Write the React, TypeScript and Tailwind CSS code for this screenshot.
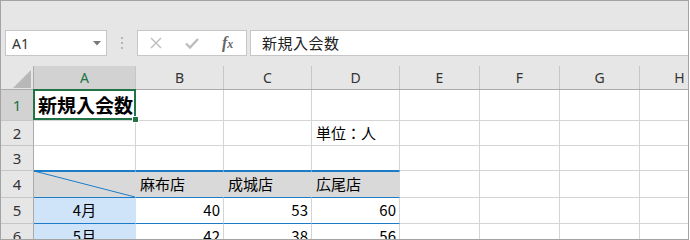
import React from "react";

type Col = { k: string; w: string };
const cols: Col[] = [
  { k: "A", w: "w-[102px]" },
  { k: "B", w: "w-[88px]" },
  { k: "C", w: "w-[88px]" },
  { k: "D", w: "w-[88px]" },
  { k: "E", w: "w-[80px]" },
  { k: "F", w: "w-[80px]" },
  { k: "G", w: "w-[80px]" },
  { k: "H", w: "w-[80px]" },
];

const jp = "font-['Noto_Sans_CJK_JP',sans-serif]";
const ui = "font-['Noto_Sans','Noto_Sans_CJK_JP',sans-serif]";

function RowHead({ n, h, sel }: { n: number; h: string; sel?: boolean }) {
  return (
    <div
      className={`${h} w-[33px] shrink-0 flex items-center justify-center border-r border-b border-r-[#ababab] border-b-[#c6c6c6] text-[15px] ${ui} ${
        sel ? "bg-[#d2d2d2] text-[#217346]" : "bg-[#e6e6e6] text-[#333333]"
      }`}
    >
      {n}
    </div>
  );
}

function Cell({
  w,
  cls,
  children,
}: {
  w: string;
  cls: string;
  children?: React.ReactNode;
}) {
  return <div className={`${w} shrink-0 h-full flex items-center whitespace-nowrap ${cls}`}>{children}</div>;
}

const plain = "border-r border-b border-[#d4d4d4]";

function Toolbar() {
  return (
    <div className="h-[55px] bg-[#e6e6e6] pt-[29px] flex items-start">
      <div className="ml-[4px] w-[102px] h-[26px] bg-white border border-[#c6c6c6] flex items-center">
        <span className={`pl-[6px] text-[14px] text-[#333333] ${ui}`}>A1</span>
        <svg className="ml-auto mr-[5px]" width="8" height="5" viewBox="0 0 8 5">
          <polygon points="0,0 8,0 4,4.5" fill="#7a7a7a" />
        </svg>
      </div>
      <div className="ml-[14px] h-[26px] flex flex-col items-center justify-center gap-[3px]">
        <div className="w-[2px] h-[2px] bg-[#b5b5b5]" />
        <div className="w-[2px] h-[2px] bg-[#b5b5b5]" />
        <div className="w-[2px] h-[2px] bg-[#b5b5b5]" />
      </div>
      <div className="ml-[14px] w-[110px] h-[26px] bg-white border border-[#c6c6c6] flex items-center">
        <svg className="ml-[12px]" width="12" height="12" viewBox="0 0 12 12">
          <path d="M1 1 L11 11 M11 1 L1 11" stroke="#bdbdbd" strokeWidth="1.4" fill="none" />
        </svg>
        <svg className="ml-[23px]" width="14" height="11" viewBox="0 0 14 11">
          <polyline points="1,5.5 5,9.5 13,1" stroke="#bdbdbd" strokeWidth="2.4" fill="none" />
        </svg>
        <span className="ml-[23px] font-['Liberation_Serif',serif] italic text-[#666666] leading-none">
          <span className="text-[16px] font-bold">f</span>
          <span className="text-[12px] font-bold">x</span>
        </span>
      </div>
      <div className="ml-[3px] flex-1 h-[26px] bg-white border border-r-0 border-[#c6c6c6] flex items-center">
        <span className={`pl-[11px] text-[15px] tracking-[0.5px] text-[#222222] ${jp}`}>新規入会数</span>
      </div>
    </div>
  );
}

function HeaderRow() {
  return (
    <div className="h-[34px] bg-[#e6e6e6] flex flex-col">
      <div className="h-[10px]" />
      <div className="h-[24px] flex border-b border-[#ababab]">
        <div className="w-[33px] shrink-0 border-r border-[#ababab] relative">
          <svg className="absolute right-[2px] bottom-[1px]" width="18" height="18" viewBox="0 0 18 18">
            <polygon points="18,0 18,18 0,18" fill="#b8b8b8" />
          </svg>
        </div>
        {cols.map((c) => (
          <div
            key={c.k}
            className={`${c.w} shrink-0 flex items-center justify-center border-r border-[#c6c6c6] text-[14px] ${ui} ${
              c.k === "A" ? "bg-[#d2d2d2] text-[#217346]" : "text-[#333333]"
            }`}
          >
            {c.k}
          </div>
        ))}
      </div>
    </div>
  );
}

export default function App() {
  const blue = "border-[#1c7cc7]";
  return (
    <div className="w-[690px] h-[240px] bg-white">
      <div className="w-[689px] h-[240px] border border-[#a3a3a3] overflow-hidden flex flex-col">
        <Toolbar />
        <div className="relative flex flex-col">
          <HeaderRow />

          {/* Row 1 */}
          <div className="h-[31px] flex">
            <RowHead n={1} h="h-[31px]" sel />
            {cols.map((c) => (
              <Cell key={c.k} w={c.w} cls={plain}>
                {c.k === "A" && (
                  <span className={`pl-[4px] text-[19px] font-bold text-black ${jp}`}>新規入会数</span>
                )}
              </Cell>
            ))}
          </div>

          {/* Row 2 */}
          <div className="h-[25px] flex">
            <RowHead n={2} h="h-[25px]" />
            {cols.map((c) => (
              <Cell key={c.k} w={c.w} cls={plain}>
                {c.k === "D" && <span className={`pl-[4px] text-[15px] text-black ${jp}`}>単位：人</span>}
              </Cell>
            ))}
          </div>

          {/* Row 3 */}
          <div className="h-[25px] flex">
            <RowHead n={3} h="h-[25px]" />
            {cols.map((c, i) => (
              <Cell
                key={c.k}
                w={c.w}
                cls={
                  i < 4
                    ? "border-r border-b border-r-[#d4d4d4] border-b-[#1c7cc7]"
                    : plain
                }
              />
            ))}
          </div>

          {/* Row 4 */}
          <div className="h-[27px] flex">
            <RowHead n={4} h="h-[27px]" />
            {cols.map((c, i) => {
              if (i >= 4) return <Cell key={c.k} w={c.w} cls={plain} />;
              const label = ["", "麻布店", "成城店", "広尾店"][i];
              return (
                <Cell
                  key={c.k}
                  w={c.w}
                  cls={`relative bg-[#d9d9d9] border-t border-b border-r ${blue} border-r-[#d9d9d9]`}
                >
                  {i === 0 ? (
                    <svg
                      className="absolute left-0 top-[-1px] w-full h-[26px]"
                      viewBox="0 0 101 26"
                      preserveAspectRatio="none"
                    >
                      <line x1="0" y1="0" x2="101" y2="26" stroke="#1c7cc7" strokeWidth="1" />
                    </svg>
                  ) : (
                    <span className={`pl-[4px] text-[15px] text-black ${jp}`}>{label}</span>
                  )}
                </Cell>
              );
            })}
          </div>

          {/* Rows 5, 6 */}
          {[
            { n: 5, m: "4月", v: ["40", "53", "60"] },
            { n: 6, m: "5月", v: ["42", "38", "56"] },
          ].map((r) => (
            <div key={r.n} className="h-[26px] flex">
              <RowHead n={r.n} h="h-[26px]" />
              {cols.map((c, i) => {
                if (i >= 4) return <Cell key={c.k} w={c.w} cls={plain} />;
                if (i === 0)
                  return (
                    <Cell
                      key={c.k}
                      w={c.w}
                      cls="justify-center bg-[#cfe4f8] border-r border-b border-r-[#cfe4f8] border-b-[#1c7cc7]"
                    >
                      <span className={`text-[15px] text-black ${jp}`}>{r.m}</span>
                    </Cell>
                  );
                return (
                  <Cell
                    key={c.k}
                    w={c.w}
                    cls="justify-end pr-[3px] border-r border-b border-r-[#d4d4d4] border-b-[#1c7cc7]"
                  >
                    <span className={`text-[15px] text-black ${jp}`}>{r.v[i - 1]}</span>
                  </Cell>
                );
              })}
            </div>
          ))}

          {/* Selection overlay */}
          <div className="absolute left-[32px] top-[33px] w-[103px] h-[31px] border-2 border-[#217346] pointer-events-none" />
          <div className="absolute left-[131px] top-[60px] w-[7px] h-[7px] bg-[#217346] border border-white" />
        </div>
      </div>
    </div>
  );
}
